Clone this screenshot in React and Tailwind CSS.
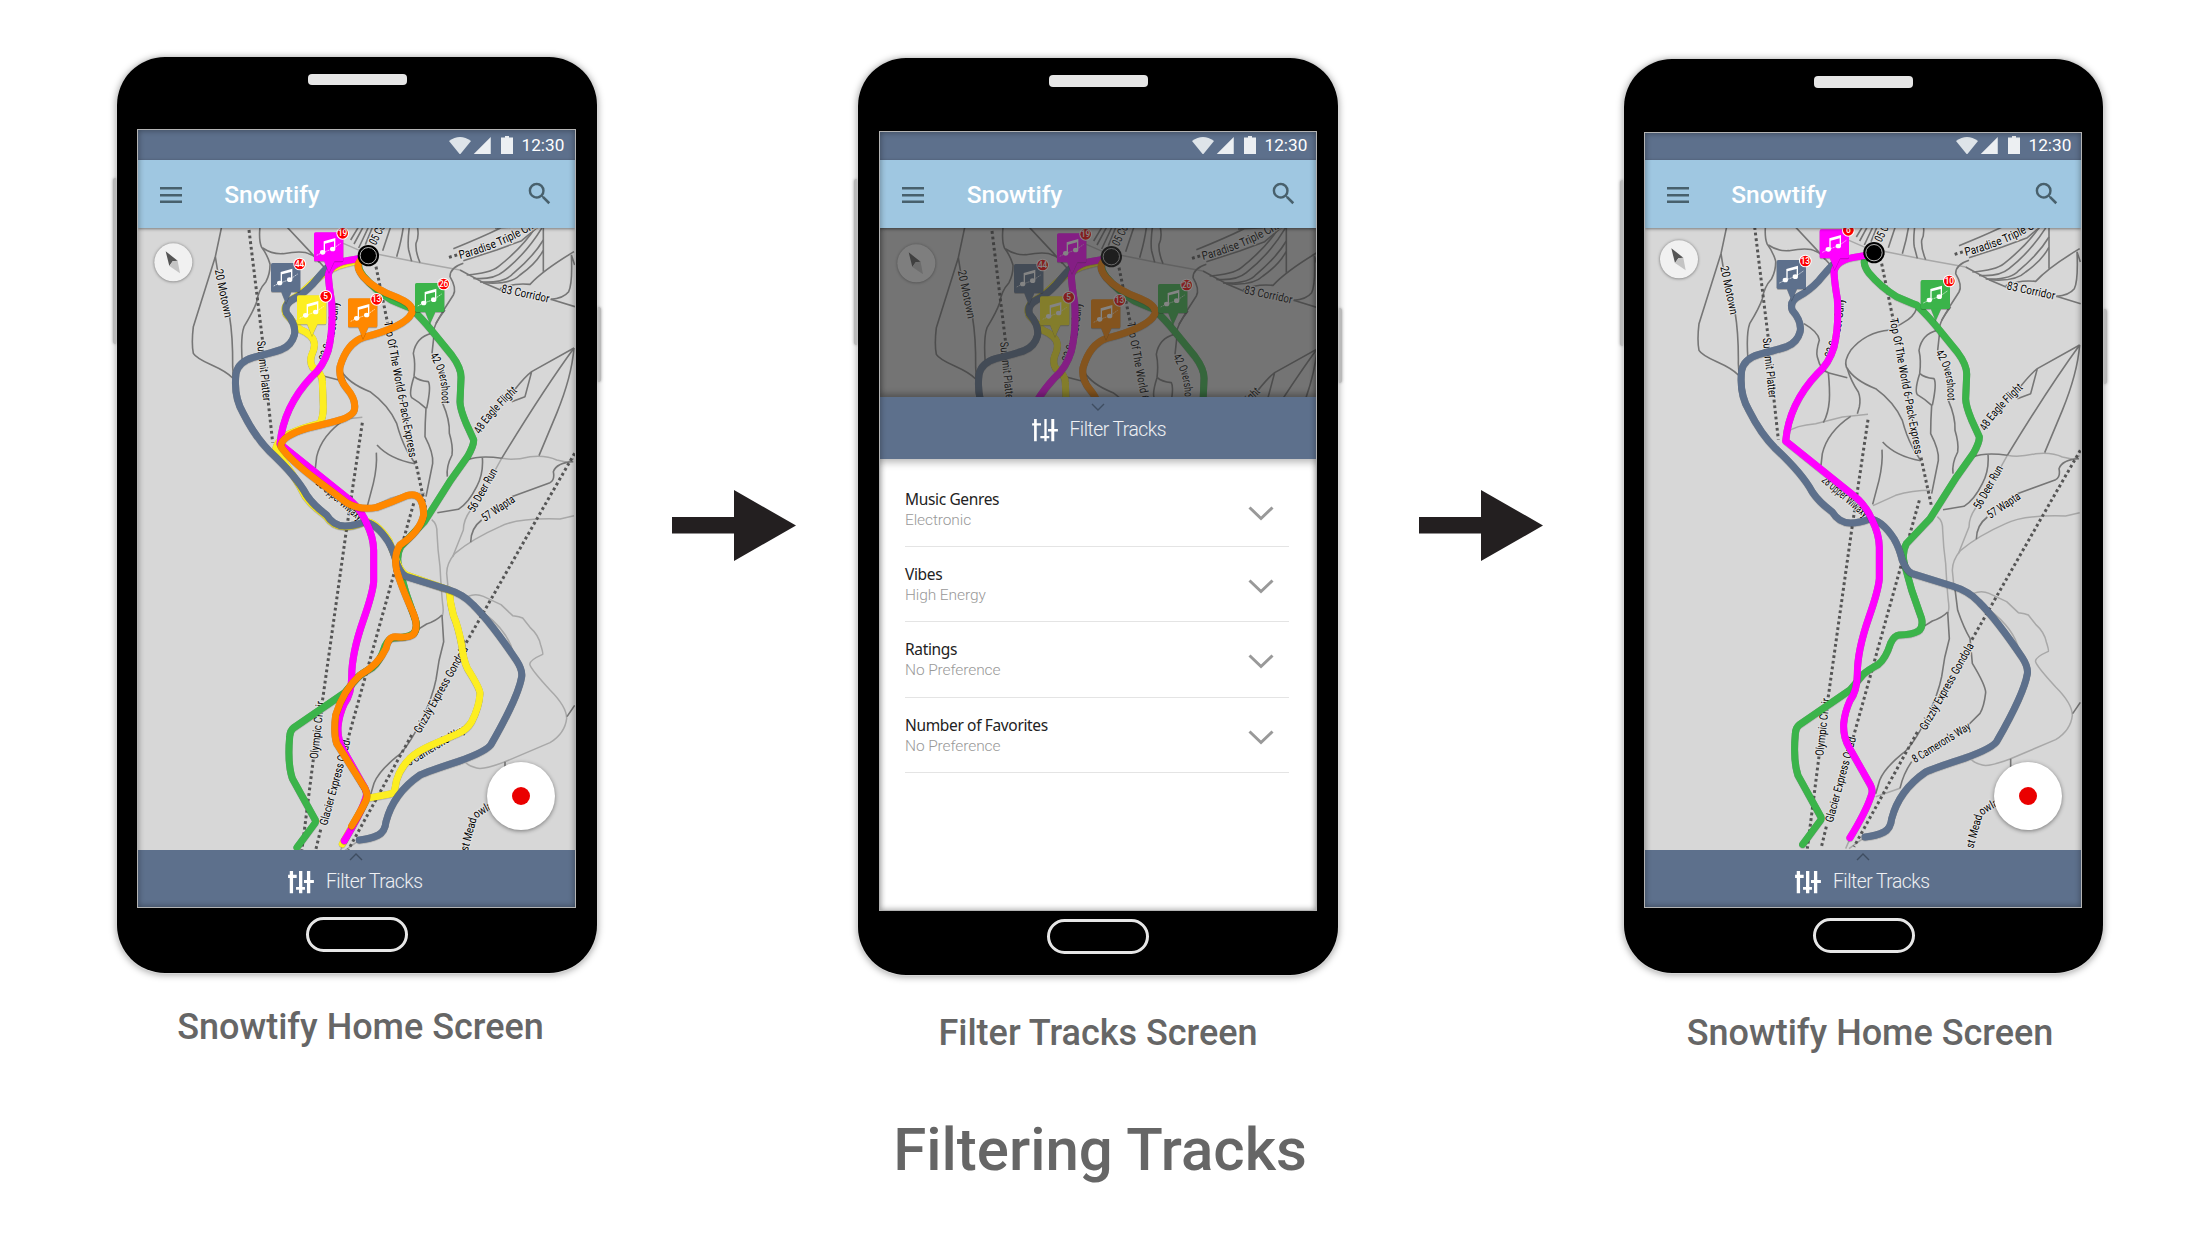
import React from "react";

const COLORS = {
  slate: "#5d708c",
  magenta: "#ff00ff",
  yellow: "#fdee21",
  orange: "#ff8800",
  green: "#3bb44a",
};

const DARK_ROADS = [
  "M275 20L256 110L190 320Q184 370 190 400Q198 414 245 435Q290 455 308 474",
  "M256 110L264 160M298 285Q309 350 308 440L310 470",
  "M390 20Q386 60 394 80Q412 104 420 132Q421 160 408 185Q385 210 380 245Q372 270 342 320Q331 350 337 430",
  "M398 84Q428 104 460 101Q520 90 540 103Q556 108 568 128M470 20L540 95L590 150",
  "M505 320Q548 345 551 369Q540 405 545 420Q555 462 580 468L635 482",
  "M578 467Q583 520 581 550Q578 590 563 617",
  "M843 274Q835 300 803 317Q790 325 763 339Q690 345 645 400Q625 430 632 450Q655 490 720 515Q775 555 800 610Q812 655 830 690L855 731",
  "M635 455Q645 490 668 525Q676 545 671 570L665 590",
  "M645 598Q575 645 560 710L556 745",
  "M741 675Q780 718 855 731M739 698Q742 740 730 790L711 862",
  "M905 340Q858 352 850 400Q857 430 852 470Q836 520 845 533Q870 548 888 565Q885 610 885 650Q911 700 908 730L888 830",
  "M853 470Q866 482 895 485Q904 500 890 565",
  "M945 270Q905 320 912 345L906 400M938 550Q960 600 958 640Q970 680 966 705Q948 740 952 770",
  "M1000 130Q960 143 960 170Q981 205 970 225Q940 270 918 310",
  "M990 150L1060 188L1120 214M1262 238L1335 260",
  "M1010 165Q1080 160 1105 140Q1180 80 1218 20",
  "M1030 175Q1090 180 1120 155Q1190 100 1238 20",
  "M1050 186Q1125 190 1150 160Q1210 110 1240 60",
  "M1060 188Q1140 195 1170 165Q1220 130 1240 90M1240 20V155",
  "M1110 206Q1150 188 1200 193Q1240 150 1332 95",
  "M1324 104Q1328 190 1316 215Q1300 235 1262 238M1324 104L1334 135",
  "M970 86Q1060 50 1120 20M1000 122L1100 90L1175 62L1225 20M1095 24L1175 20",
  "M700 20L672 72M716 20L686 84M686 20L662 60M728 20L706 74",
  "M782 20L758 92M820 20Q815 60 800 110M838 20Q832 70 836 90L845 124M862 20Q868 50 858 70Q856 95 870 128",
  "M1332 384L1205 455Q1185 470 1155 508M1205 455L1185 530L1145 545",
  "M1332 384Q1240 510 1115 715M1332 384Q1325 470 1280 580L1227 707",
  "M1010 720Q1050 705 1115 715M1057 712Q1061 760 1040 800Q1015 850 985 868L922 878",
  "M1145 830L1260 788Q1275 780 1270 755Q1280 728 1330 725M1055 900Q1022 925 1022 967",
  "M956 1100L966 1180Q985 1235 1003 1264L1010 1339Q1050 1405 1050 1427Q1045 1470 1033 1489L998 1524",
  "M828 1634Q803 1670 793 1714",
  "M936 1185L941 1265Q925 1320 918 1379Q908 1430 875 1500Q830 1590 800 1610Q745 1655 732 1690L720 1730",
  "M936 1185Q920 1202 890 1212L863 1229",
  "M1311 1490L1334 1456M1125 1625V1700",
];

const LIGHT_ROADS = [
  "M640 70L690 92L770 108L870 128L990 150",
  "M455 645Q480 625 540 620L620 600L697 592",
  "M712 866L780 835Q830 820 885 820",
  "M1115 715Q1150 722 1200 710Q1250 705 1280 720L1312 727L1332 716",
  "M1115 715L1090 760M1022 870Q1000 900 1000 930L968 1010",
  "M1332 887L1290 897Q1160 893 1110 920Q1030 955 975 1000Q950 1030 950 1060L955 1110",
  "M905 899Q922 912 921 940Q923 990 930 1040Q935 1130 939 1160Q941 1180 936 1189",
  "M1013 1129Q1038 1119 1060 1129L1113 1154L1148 1187Q1170 1190 1178 1194L1200 1222Q1226 1245 1232 1275Q1240 1300 1238 1303Q1195 1322 1200 1335Q1205 1350 1260 1410Q1310 1460 1310 1495Q1305 1540 1260 1568L1123 1626Q1060 1650 1040 1644Q1020 1640 1008 1629",
  "M1063 1180Q1135 1235 1150 1299",
  "M793 1714L720 1739M643 1865L630 1895M690 1859L640 1895",
];

const LIFTS = [
  "M357 30L398 365M415 548L428 668",
  "M738 140L773 310M856 722L888 870",
  "M697 608L648 939L577 1445M550 1618L515 1895",
  "M851 850L795 1050L653 1560M572 1829L556 1895",
  "M1334 700L1248 849L1008 1269M845 1545L655 1889",
  "M957 112L990 102",
];

const TRACKS = {
  green:
    "M690 118Q678 140 700 168Q735 210 783 239Q820 255 843 264Q880 300 903 329L965 405Q995 445 993 475L990 545Q990 565 1008 609L1031 659Q1032 675 1013 709L963 779L883 905L812 980Q798 1005 806 1040L828 1119L858 1205Q863 1232 848 1242Q830 1253 790 1254Q775 1256 765 1278Q750 1325 728 1342Q695 1360 683 1372L643 1419L490 1524Q480 1532 479 1550Q472 1630 487 1675L556 1800Q558 1806 553 1812L501 1882",
  yellow:
    "M690 120L650 130Q600 140 548 187Q517 219 488 236Q457 255 468 282L510 328Q550 345 553 370Q555 385 545 405Q538 425 548 442Q577 460 577 485L580 560Q580 590 570 610Q520 622 480 640Q440 660 437 690Q492 763 526 829Q547 858 588 888Q610 921 645 920Q670 920 702 906Q735 900 777 962L803 1030Q815 1060 832 1066L958 1110Q960 1150 970 1185Q985 1220 995 1275Q1000 1320 1012 1345Q1050 1405 1050 1420Q1048 1460 1025 1505Q1010 1530 985 1540L905 1575Q860 1595 840 1615Q800 1655 795 1705Q795 1720 780 1722L712 1735L637 1872",
  slate:
    "M590 145Q575 160 550 190Q520 222 490 237Q460 252 470 280Q500 315 493 345Q485 375 455 388Q430 397 370 412Q325 425 318 460Q310 530 340 580Q375 650 420 695Q500 770 530 825Q550 855 590 885Q610 918 645 918Q670 918 700 907Q735 905 775 965Q790 990 800 1030Q815 1065 830 1070L950 1107Q1000 1122 1030 1155Q1085 1210 1160 1322Q1178 1350 1175 1370Q1165 1430 1085 1570Q1075 1592 985 1624Q890 1655 870 1665Q790 1720 768 1805Q765 1835 745 1845Q720 1857 688 1860",
  magenta:
    "M690 115L650 122Q600 132 595 165Q597 200 605 245Q610 330 595 390Q580 440 545 470Q460 560 450 672L652 834Q690 862 710 910Q730 950 731 990V1085Q728 1120 700 1200Q665 1300 665 1370Q665 1420 643 1450Q627 1485 624 1520Q622 1560 640 1590L705 1705Q714 1722 705 1740Q690 1785 643 1862",
  orange:
    "M690 122Q675 140 700 170Q730 205 800 232Q855 255 845 280Q825 320 700 352Q650 370 630 440Q625 475 650 505Q680 540 673 570Q668 592 600 608L530 625Q450 650 453 680Q480 720 560 780Q620 825 650 848Q690 872 740 862Q790 845 830 827Q880 812 881 885Q870 935 810 975Q790 1005 800 1050Q810 1090 850 1180Q867 1222 850 1243Q835 1255 795 1250Q775 1250 768 1285Q745 1335 690 1365Q640 1410 617 1485Q610 1540 620 1570L705 1705Q715 1725 708 1740Q695 1770 665 1818",
};

const PINS = {
  magenta: [552, 37],
  slate: [423, 129],
  yellow: [501, 226],
  orange: [654, 235],
  green: [855, 189],
};

// Each label: baseline path, text, drawn length along the path.
const LABELS = [
  ["M254 150L286 302", "20 Motown", 147],
  ["M381 364L401 555", "Summit Platter", 181],
  ["M762 306L841 726", "Top Of The World 6-Pack-Express", 414],
  ["M899 408Q945 470 933 580", "42 Overshoot", 150],
  ["M737 77L790 -27", "05 Coyote", 112],
  ["M990 117Q1130 82 1260 -5", "Paradise Triple Chair", 275],
  ["M1112 217L1266 250", "83 Corridor", 147],
  ["M1051 643Q1077 592 1175 503", "48 Eagle Flight", 172],
  ["M1032 879L1109 743", "56 Deer Run", 144],
  ["M1064 906L1170 835", "57 Wapta", 112],
  ["M556 792L690 907", "28 Upper Wiwaxy", 170],
  ["M588 425Q627 330 625 225", "22 Sunset Gully", 184],
  ["M563 1618L583 1440", "Olympic Chair", 174],
  ["M591 1818L667 1543", "Glacier Express Quad", 264],
  ["M871 1542L1021 1276", "Grizzly Express Gondola", 294],
  ["M838 1639L1019 1528", "8 Cameron's Way", 199],
  ["M1013 1895L1039 1800Q1048 1783 1130 1746", "st Meadowlark", 186],
];

function Pin({ color, count }) {
  const [x, y] = PINS[color];
  return (
    <g transform={`translate(${x} ${y})`}>
      <g style={{ filter: "drop-shadow(0 2px 2px rgba(0,0,0,.35))" }} fill={COLORS[color]}>
        <rect width="88" height="87" rx="5" />
        <path d="M30 85H62L45 122Z" />
      </g>
      <g fill="#fff">
        <path d="M29 27L64 17V48H60V27L33 34V60H29Z" />
        <ellipse cx="26" cy="60" rx="8" ry="7" />
        <ellipse cx="56" cy="50" rx="8" ry="7" />
      </g>
      <path d="M8 69L26 60L56 50L80 33" fill="none" stroke="#fff" strokeWidth="2" strokeDasharray="5 2" />
      <circle cx="86" cy="3" r="19" fill="#fff" />
      <circle cx="86" cy="3" r="16" fill="#f00" />
      <text x="85.5" y="11.5" textAnchor="middle" fill="#fff" fontSize="25" fontWeight="500" letterSpacing="-1">
        {count}
      </text>
    </g>
  );
}

function TrailMap({ id, viewBox, tracks, pins, className }) {
  return (
    <svg viewBox={viewBox} preserveAspectRatio="xMinYMin slice" className={className} fontFamily="Roboto, sans-serif">
      <g fill="none" stroke="#a8a8a8" strokeWidth="4.5" strokeLinejoin="round">
        {LIGHT_ROADS.map((d) => (
          <path key={d} d={d} />
        ))}
      </g>
      <g fill="none" stroke="#767676" strokeWidth="4.8" strokeLinejoin="round">
        {DARK_ROADS.map((d) => (
          <path key={d} d={d} />
        ))}
      </g>
      <g fill="none" stroke="#555555" strokeWidth="9" strokeDasharray="8.500 8.500">
        {LIFTS.map((d) => (
          <path key={d} d={d} />
        ))}
      </g>
      {LABELS.map(([d, label, length], i) => (
        <g key={label}>
          <path id={`${id}-label-${i}`} d={d} fill="none" />
          <text
            fontSize="35"
            fill="#000"
            stroke="#e2e2e2"
            strokeWidth="7"
            strokeLinejoin="round"
            paintOrder="stroke"
            textRendering="geometricPrecision"
          >
            <textPath href={`#${id}-label-${i}`} textLength={length} lengthAdjust="spacingAndGlyphs">
              {label}
            </textPath>
          </text>
        </g>
      ))}
      <g fill="none" strokeWidth="21" strokeLinejoin="round" strokeLinecap="round">
        {tracks.map((name) => (
          <path
            key={name}
            d={TRACKS[name]}
            stroke={COLORS[name]}
            style={{ filter: "drop-shadow(0 1px 2px rgba(0,0,0,.4))" }}
          />
        ))}
      </g>
      <circle cx="715" cy="107" r="32" fill="#000" />
      <circle cx="715" cy="107" r="24.5" fill="#000" stroke="#ddd" strokeWidth="2.5" />
      {pins.map(([name, count]) => (
        <Pin key={name} color={name} count={count} />
      ))}
      <circle cx="130" cy="127" r="57" fill="#f1f1f1" style={{ filter: "drop-shadow(0 1px 4px rgba(0,0,0,.5))" }} />
      <path d="M107 94L143 122L128 124L118 138Z" fill="#555" />
      <path d="M143 122L150 160L118 138L128 124Z" fill="#c4c4c4" />
    </svg>
  );
}

function StatusBar({ className }) {
  return (
    <div className={`flex shrink-0 items-end justify-end bg-[#5d708c] pb-1.5 text-white/90 ${className}`}>
      <svg viewBox="0 0 22 17.5" className="h-[17.5px] w-[22px]" fill="#dee4e9">
        <path d="M0 4Q11 -4 22 4L11 17.5Z" />
      </svg>
      <svg viewBox="0 0 18 18" className="ml-[2px] h-[17.5px] w-[18px]" fill="#eceff2">
        <path d="M18 0V18H0Z" />
      </svg>
      <svg viewBox="0 0 12 18" className="ml-[10px] h-[18px] w-[12px]" fill="#eceff2">
        <path d="M4 0H8V1.500H12V18H0V1.500H4Z" />
      </svg>
      <span className="ml-[9px] h-[18px] w-[43px] text-[17.200px] leading-[19px] whitespace-nowrap text-white">
        12:30
      </span>
    </div>
  );
}

function AppBar({ className, searchClass }) {
  return (
    <header
      className={`relative z-10 flex h-[68px] shrink-0 items-center bg-[#9fc7e1] shadow-[0_1px_3px_rgba(0,0,0,.45)] ${className}`}
    >
      <svg viewBox="0 0 22 17" className="h-[17px] w-[22px]" fill="#48606c">
        <path d="M0 1H22V3.500H0ZM0 8H22V10.500H0ZM0 14.500H22V17H0Z" />
      </svg>
      <h2 className="mt-[2px] ml-[42.500px] text-[24.500px] leading-none font-medium text-white">Snowtify</h2>
      <svg viewBox="0 0 24 24" className={`ml-auto size-[29.5px] ${searchClass}`} fill="#48606c">
        <path d="M15.5 14h-.79l-.28-.27A6.47 6.47 0 0 0 16 9.500 6.500 6.500 0 1 0 9.500 16c1.610 0 3.090-.59 4.230-1.570l.27.28v.79l5 4.990L20.490 19l-4.990-5zm-6 0C7.010 14 5 11.990 5 9.500S7.010 5 9.500 5 14 7.010 14 9.500 11.990 14 9.500 14z" />
      </svg>
    </header>
  );
}

function FilterBar({ open, className }) {
  return (
    <div className={`relative z-10 flex shrink-0 items-start bg-[#5d708c] ${className}`}>
      <svg
        viewBox="0 0 14 8"
        className={`absolute left-[211px] h-2 w-3.5 ${open ? "top-[6px]" : "top-[3px]"}`}
        fill="none"
        stroke="#3f4d61"
        strokeWidth="1.4"
      >
        <path d={open ? "M1 1L7 7L13 1" : "M1 7L7 1L13 7"} />
      </svg>
      <svg viewBox="0 0 78 68" className="mt-[21px] h-[22.5px] w-[26px]" fill="#fff">
        {open ? (
          <path d="M6 0H14V67H6ZM0 13H27V20H0ZM37 0H44V67H37ZM25 51H52V58H25ZM58 0H67V67H58ZM48 30H78V38H48Z" />
        ) : (
          <path d="M5 0H15V67H5ZM0 11H26V21H0ZM33 0H43V67H33ZM24 48H51V57H24ZM57 0H67V67H57ZM48 27H78V36H48Z" />
        )}
      </svg>
      <span className="mt-[20px] ml-[12px] text-[19.300px] leading-6 font-light tracking-[-0.5px] whitespace-nowrap text-white/90">
        Filter Tracks
      </span>
    </div>
  );
}

function RecordButton({ className }) {
  return (
    <button
      aria-label="Record track"
      className={`absolute bottom-[20px] flex size-[68px] items-center justify-center rounded-full bg-white shadow-[0_1px_4px_rgba(0,0,0,.45)] ${className}`}
    >
      <span className="size-[18px] rounded-full bg-[#ea0000]" />
    </button>
  );
}

const FILTERS = [
  ["Music Genres", "Electronic"],
  ["Vibes", "High Energy"],
  ["Ratings", "No Preference"],
  ["Number of Favorites", "No Preference"],
];

function FilterList() {
  return (
    <ul className="flex-1 bg-white pt-[12.500px] pr-[27px] pl-[25px] shadow-[inset_0_6px_8px_-3px_rgba(0,0,0,.3)]">
      {FILTERS.map(([title, value], i) => (
        <li key={title} className="flex h-[75.400px] items-center justify-between border-b border-[#e4e4e4] pr-[15px]">
          <div className="pt-[2px]">
            <div className="font-['Noto_Sans'] text-[15.500px] leading-[21px] tracking-[-0.35px] text-[#222]">{title}</div>
            <div className="text-[15.500px] leading-[21px] font-light tracking-[-0.1px] text-[#999]">{value}</div>
          </div>
          <svg
            viewBox="0 0 26 15"
            className={`h-[15px] w-[26px] ${i === 0 ? "mt-[9px]" : "mt-[5px]"}`}
            fill="none"
            stroke="#999"
            strokeWidth="3"
          >
            <path d="M1.500 1.500L13 12.500L24.500 1.500" />
          </svg>
        </li>
      ))}
    </ul>
  );
}

function Phone({ className, speaker, screen, home, caption, captionClass, children }) {
  return (
    <figure className="flex shrink-0 flex-col items-center">
      <div
        className={`relative flex shrink-0 flex-col items-center rounded-[48px] bg-black shadow-[0_0_0_1px_#d6d6d6,0_1px_7px_1px_rgba(0,0,0,.35)] ${className}`}
      >
        <span className="absolute top-[121px] -left-[4px] h-[166px] w-[3px] rounded-l-sm bg-[#b9b9b9] shadow-[0_0_3px_rgba(0,0,0,.3)]" />
        <span className="absolute top-[250px] -right-[4px] h-[75px] w-[3px] rounded-r-sm bg-[#b9b9b9] shadow-[0_0_3px_rgba(0,0,0,.3)]" />
        <div className={`h-[11.500px] w-[99px] shrink-0 rounded-[4px] bg-[#e6e6e6] ${speaker}`} />
        <div className={`relative flex shrink-0 flex-col overflow-hidden border border-[#b3b3b3] ${screen}`}>
          {children}
          <div className="pointer-events-none absolute inset-0 z-20 shadow-[inset_0_0_6px_rgba(0,0,0,.4)]" />
        </div>
        <div className={`h-[35px] w-[102px] shrink-0 rounded-full border-3 border-[#e6e6e6] ${home}`} />
      </div>
      <figcaption className={`text-[36px] leading-[42px] font-medium whitespace-nowrap text-[#666] ${captionClass}`}>
        {caption}
      </figcaption>
    </figure>
  );
}

function Arrow({ className }) {
  return (
    <svg viewBox="0 0 124 71" className={`mt-[490px] h-[71px] w-[124px] shrink-0 ${className}`} fill="#231f20">
      <path d="M0 27H62V0L124 35.500L62 71V43.500H0Z" />
    </svg>
  );
}

const ALL_TRACKS = ["green", "yellow", "slate", "magenta", "orange"];
const ALL_PINS = [
  ["slate", 44],
  ["magenta", 19],
  ["yellow", 5],
  ["orange", 13],
  ["green", 26],
];

export default function App() {
  return (
    <main className="flex h-[1240px] w-[2200px] flex-col overflow-hidden bg-white font-['Roboto',sans-serif]">
      <div className="flex h-[1080px] items-start pl-[117px]">
        <div className="w-[480px] pt-[57px]">
          <Phone
            className="h-[916px] w-[480px]"
            speaker="mt-[16.500px]"
            screen="mr-[1px] mt-[44px] h-[779px] w-[439px]"
            home="mt-[9px]"
            caption="Snowtify Home Screen"
            captionClass="mt-[33px] ml-[7px]"
          >
            <StatusBar className="h-[30px] pr-[10.500px]" />
            <AppBar className="pl-[21.700px]" searchClass="mr-[21px]" />
            <div className="relative h-[622px] shrink-0 bg-[#d7d7d7]">
              <TrailMap
                id="home"
                viewBox="24 24 1311 1866"
                tracks={ALL_TRACKS}
                pins={ALL_PINS}
                className="h-full w-full"
              />
              <RecordButton className="right-[20px]" />
            </div>
            <FilterBar className="h-[57px] pl-[150px]" />
          </Phone>
        </div>

        <Arrow className="ml-[75px]" />

        <div className="ml-[62px] w-[480px] pt-[58px]">
          <Phone
            className="h-[917px] w-[480px]"
            speaker="mt-[17px]"
            screen="mt-[44.500px] h-[780px] w-[438px]"
            home="mt-[8px]"
            caption="Filter Tracks Screen"
            captionClass="mt-[36.500px]"
          >
            <StatusBar className="h-[28px] pr-[8.500px]" />
            <AppBar className="pl-[22.200px]" searchClass="mr-[18px]" />
            <div className="relative h-[169px] shrink-0 bg-[#d7d7d7]">
              <TrailMap
                id="filter"
                viewBox="21 21 1308 507"
                tracks={ALL_TRACKS}
                pins={ALL_PINS}
                className="h-full w-full"
              />
              <div className="absolute inset-0 bg-[#323232]/60 shadow-[inset_0_-3px_6px_rgba(0,0,0,.3)]" />
            </div>
            <FilterBar open className="h-[62px] pt-[1px] pl-[151.500px]" />
            <FilterList />
          </Phone>
        </div>

        <Arrow className="ml-[81px]" />

        <div className="ml-[81px] w-[479px] pt-[59px]">
          <Phone
            className="h-[914px] w-[479px]"
            speaker="mt-[17px]"
            screen="mr-[1px] mt-[44.500px] h-[776px] w-[438px]"
            home="mt-[10px]"
            caption="Snowtify Home Screen"
            captionClass="mt-[38.500px] ml-[13px]"
          >
            <StatusBar className="h-[27px] pr-[9.500px]" />
            <AppBar className="pl-[21.700px]" searchClass="mr-[20px]" />
            <div className="relative h-[622px] shrink-0 bg-[#d7d7d7]">
              <TrailMap
                id="filtered"
                viewBox="28 33 1308 1866"
                tracks={["green", "slate", "magenta"]}
                pins={[
                  ["slate", 13],
                  ["magenta", 6],
                  ["green", 10],
                ]}
                className="h-full w-full"
              />
              <RecordButton className="right-[19px]" />
            </div>
            <FilterBar className="h-[57px] pl-[150px]" />
          </Phone>
        </div>
      </div>

      <h1 className="mt-[34px] text-center text-[60px] leading-[72px] font-medium text-[#666]">Filtering Tracks</h1>
    </main>
  );
}
